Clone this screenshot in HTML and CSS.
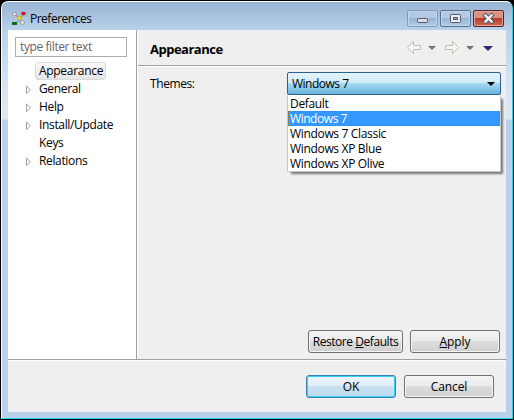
FILE: index.html
```html
<!DOCTYPE html>
<html lang="en">
<head>
<meta charset="utf-8">
<title>Preferences</title>
<link rel="stylesheet" href="styles.css">
</head>
<body>
<div class="window">
  <header class="titlebar">
    <svg class="app-icon" width="16" height="16" viewBox="0 0 16 16">
      <path d="M3 3L12 13M12 3L4 13" stroke="#888" stroke-width="1"/>
      <circle cx="2.5" cy="3" r="1.8" fill="#eee" stroke="#999"/>
      <ellipse cx="11.500" cy="2.500" rx="2.300" ry="1.800" fill="#d40c18"/>
      <circle cx="7.500" cy="7" r="2" fill="#f2df22" stroke="#aa9c32" stroke-width=".6"/>
      <path d="M0 11h5v3H0z" fill="#086c12"/>
      <circle cx="10.500" cy="11.500" r="1.900" fill="#eee" stroke="#999"/>
    </svg>
    <h1>Preferences</h1>
    <div class="controls">
      <span class="ctl min"><svg width="29" height="15"><rect x="9.5" y="7.5" width="10" height="4" rx=".8" fill="#ddd" stroke="#555b66"/></svg></span>
      <span class="ctl"><svg width="29" height="15"><rect x="9.5" y="3.5" width="10" height="8" rx=".8" fill="#eee" stroke="#535966"/><rect x="12.5" y="6.5" width="4" height="2" fill="#8fb3dc" stroke="#535966"/></svg></span>
      <span class="ctl close"><svg width="29" height="15"><path d="M11.500 4.500l6 6M17.500 4.500l-6 6" stroke="#555966" stroke-width="4.400" stroke-linecap="square"/><path d="M11.500 4.500l6 6M17.500 4.500l-6 6" stroke="#f4f4f4" stroke-width="2.400" stroke-linecap="square"/></svg></span>
    </div>
  </header>
  <main class="client">
    <div class="split">
      <nav class="sidebar">
        <div class="filter">type filter text</div>
        <ul class="tree">
          <li class="selected"><span>Appearance</span></li>
          <li class="branch"><svg width="7" height="10"><path d="M1.5 1v7.6L5.5 4.8z" fill="#fff" stroke="#a3a3a3"/></svg><span>General</span></li>
          <li class="branch"><svg width="7" height="10"><path d="M1.5 1v7.6L5.5 4.8z" fill="#fff" stroke="#a3a3a3"/></svg><span>Help</span></li>
          <li class="branch"><svg width="7" height="10"><path d="M1.5 1v7.6L5.5 4.8z" fill="#fff" stroke="#a3a3a3"/></svg><span>Install/Update</span></li>
          <li><span>Keys</span></li>
          <li class="branch"><svg width="7" height="10"><path d="M1.5 1v7.6L5.5 4.8z" fill="#fff" stroke="#a3a3a3"/></svg><span>Relations</span></li>
        </ul>
      </nav>
      <section class="page">
        <div class="page-head">
          <h2>Appearance</h2>
          <svg class="nav" width="90" height="14" viewBox="0 0 90 14">
            <path d="M.5 6.500L6.500 .5V4.500H13.500V8.500H6.500V12.500Z" fill="#f8f8f0" stroke="#bcbcb2"/>
            <path d="M21 5h8l-4 4z" fill="#707070"/>
            <path d="M51.500 6.500L45.500 .5V4.500H38.500V8.500H45.500V12.500Z" fill="#f8f8f0" stroke="#bcbcb2"/>
            <path d="M59 5h8l-4 4z" fill="#707070"/>
            <path d="M76 5h10l-5 5z" fill="#29277a"/>
          </svg>
        </div>
        <div class="field">
          <span class="label">Themes:</span>
          <div class="combo">
            <span>Windows 7</span><svg width="8" height="4"><path d="M0 0h8L4 4z"/></svg>
            <ul class="options">
              <li>Default</li><li class="active">Windows 7</li><li>Windows 7 Classic</li><li>Windows XP Blue</li><li>Windows XP Olive</li>
            </ul>
          </div>
        </div>
        <div class="page-actions">
          <button class="restore">Restore <u>D</u>efaults</button><button><u>A</u>pply</button>
        </div>
      </section>
    </div>
    <footer class="actions"><button class="default">OK</button><button>Cancel</button></footer>
  </main>
</div>
</body>
</html>
```
FILE: styles.css
```css
* { box-sizing: border-box; }
body { margin: 0; width: 514px; height: 420px; overflow: hidden; background: #000; font: 12px/16px "Open Sans", "Noto Sans", sans-serif; color: #000; }
h1, h2, ul { margin: 0; padding: 0; list-style: none; }
svg { display: block; flex: none; }
.window { width: 512px; height: 418px; margin: 1px; border: 1px solid #fff; border-right-color: #23d5ef; border-bottom-color: #23d5ef; border-radius: 7px 7px 0 0; padding: 0 6px; background: linear-gradient(#98b4d3, #b9d1ea 28px, #d5e4f4 80px, #dce8f6 117px, #b9d1ea 118px); }
.titlebar { height: 28px; display: flex; align-items: flex-start; padding: 9px 2px 0 4px; }
.titlebar h1 { font-size: 12px; font-weight: 400; margin-left: 2px; letter-spacing: -.5px; }
.controls { display: flex; gap: 2px; margin-left: auto; margin-top: -1px; }
.ctl { width: 31px; height: 17px; border: 1px solid #58708f; border-radius: 2px; box-shadow: inset 0 0 0 1px #c4d7ed; background: linear-gradient(#b3cae4 50%, #98b4d4 50%, #b2cce8); }
.min { border-color: #819ab8; }
.close { border-color: #57202a; box-shadow: inset 0 0 0 1px #e2a49b; background: linear-gradient(#d89382 45%, #b93b27 50%, #cf6d50); }
.client { height: 382px; background: #efefef; }
.split { height: 331px; display: flex; border-bottom: 1px solid #fff; box-shadow: inset 0 -1px #a0a0a0; }
.sidebar { width: 129px; margin-bottom: 1px; padding: 7px; background: #fff; border-right: 1px solid #a0a0a0; }
.filter { width: 112px; height: 20px; border: 1px solid #abadb3; padding: 1px 4px; color: #666; white-space: nowrap; letter-spacing: -.4px; }
.tree { padding-top: 5px; }
.tree li { height: 18px; display: flex; align-items: center; padding-left: 20px; letter-spacing: -.35px; }
.tree span { padding: 0 4px; }
.tree .branch { padding-left: 10px; }
.branch svg { margin-right: 3px; margin-top: 2px; }
.tree .selected span { height: 18px; width: 71px; padding: 0 3px; border: 1px solid #d9d9d9; border-radius: 3px; background: linear-gradient(#fafafa, #e6e6e6); letter-spacing: -.3px; }
.page { flex: 1; margin-bottom: 1px; border-left: 1px solid #fff; display: flex; flex-direction: column; }
.page-head { height: 37px; display: flex; justify-content: space-between; padding: 11px 9px 0 12px; border-bottom: 1px solid #fff; box-shadow: inset 0 -1px #a0a0a0; }
.page-head h2 { font-size: 13px; line-height: 16px; letter-spacing: -.5px; }
.field { display: flex; justify-content: space-between; padding: 5px 5px 0 12px; }
.label { padding-top: 4px; letter-spacing: -.4px; }
.combo { position: relative; width: 214px; height: 23px; display: flex; align-items: center; justify-content: space-between; padding: 0 5px 0 4px; border: 1px solid #2c628b; border-radius: 2px; background: linear-gradient(#e3f4fc, #d1ebf9 48%, #a6d9f2 50%, #68b3db); letter-spacing: -.5px; }
.options { position: absolute; left: -1px; top: 22px; width: 214px; height: 77px; background: #fff; border: 1px solid #c5c8cf; border-top: 0; box-shadow: 3px 3px 2px -1px #777; }
.options li { height: 15px; line-height: 15px; padding-left: 2px; letter-spacing: -.33px; }
.options .active { color: #fff; background: #3399ff; outline: 1px dotted #cc6600; outline-offset: -1px; }
.options .active { letter-spacing: -.45px; }
.options { padding-top: 1px; }
.page-actions { margin-top: auto; display: flex; justify-content: flex-end; gap: 7px; padding: 0 6px 6px; }
button { width: 90px; height: 23px; padding: 0; font: inherit; color: #000; border: 1px solid #707070; border-radius: 3px; background: linear-gradient(#f2f2f2, #ebebeb 49%, #dddddd 50%, #cfcfcf); box-shadow: inset 0 0 0 1px #f7f7f7; white-space: nowrap; letter-spacing: -.1px; }
.restore { width: 95px; letter-spacing: -.45px; }
.actions { display: flex; justify-content: flex-end; gap: 8px; padding: 14px 12px; }
.default { border-color: #3c7fb1; box-shadow: inset 0 0 0 1px #36d2fa; background: linear-gradient(#edf5fa, #deedf6 49%, #c9e2f1 50%, #bbd9eb); }
```
